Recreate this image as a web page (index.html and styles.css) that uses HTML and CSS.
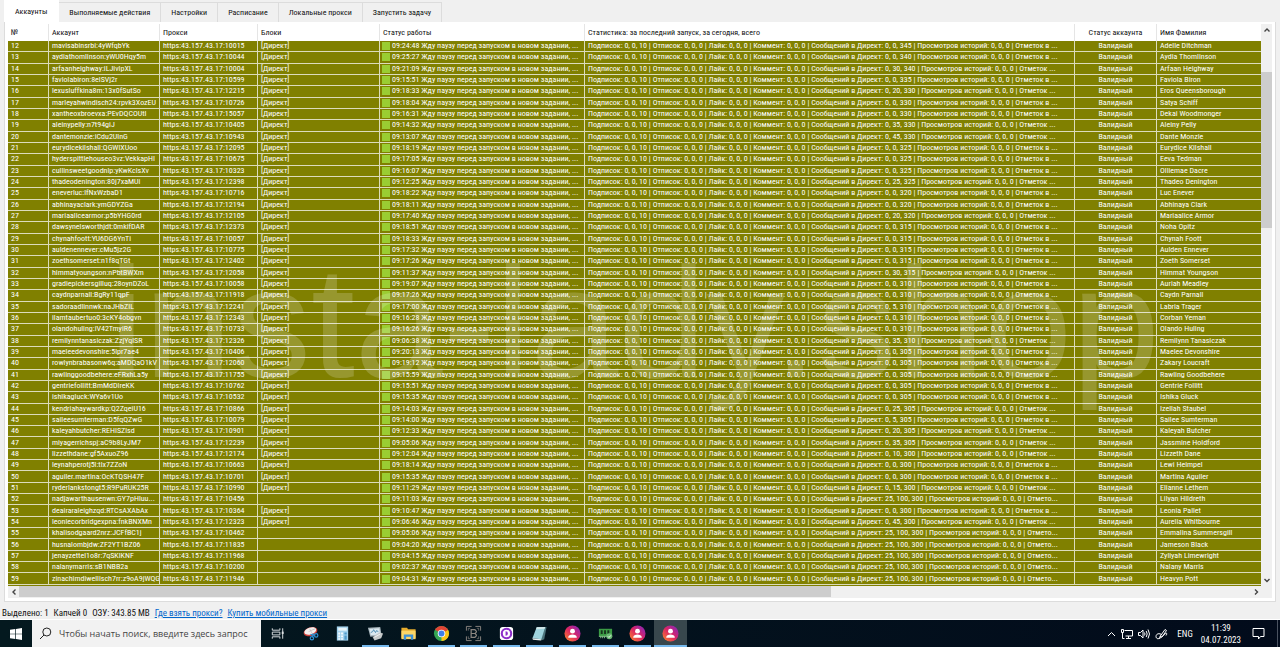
FILE: index.html
```
<!DOCTYPE html>
<html lang="ru">
  <head>
    <meta charset="UTF-8" />
    <meta name="viewport" content="width=device-width, initial-scale=1.0" />
    <title>Аккаунты</title>
    <link rel="stylesheet" href="styles.css">
  </head>
  <body>
    <main class="window">
      <nav class="tabs">
        <button class="tab active">Аккаунты</button>
        <button class="tab">Выполняемые действия</button>
        <button class="tab">Настройки</button>
        <button class="tab">Расписание</button>
        <button class="tab">Локальные прокси</button>
        <button class="tab">Запустить задачу</button>
      </nav>

      <div class="panel">
        <div class="table-view">
          <table class="accounts">
            <colgroup>
              <col class="col-num">
              <col class="col-account">
              <col class="col-proxy">
              <col class="col-blocks">
              <col class="col-status">
              <col class="col-stats">
              <col class="col-valid">
              <col class="col-name">
            </colgroup>
            <thead>
              <tr>
                <th>№</th>
                <th>Аккаунт</th>
                <th>Прокси</th>
                <th>Блоки</th>
                <th>Статус работы</th>
                <th>Статистика: за последний запуск, за сегодня, всего</th>
                <th class="center">Статус аккаунта</th>
                <th>Имя Фамилия</th>
              </tr>
            </thead>
            <tbody id="rows"></tbody>
          </table>
          <div class="watermark">insta-lady.shop</div>
        </div>
        <div class="scroll-y">
          <button class="arrow" aria-label="Вверх"><svg viewBox="0 0 8 8"><path d="M1.5 5.5 4 3l2.5 2.5" /></svg></button>
          <div class="track-y"><div class="thumb-y"></div></div>
          <button class="arrow" aria-label="Вниз"><svg viewBox="0 0 8 8"><path d="M1.5 3 4 5.5 6.5 3" /></svg></button>
        </div>
        <div class="scroll-x">
          <button class="arrow" aria-label="Влево"><svg viewBox="0 0 8 8"><path d="M5.5 1.5 3 4l2.5 2.5" /></svg></button>
          <div class="track-x"><div class="thumb-x"></div></div>
          <button class="arrow" aria-label="Вправо"><svg viewBox="0 0 8 8"><path d="M3 1.5 5.5 4 3 6.5" /></svg></button>
        </div>
      </div>

      <footer class="status-bar">
        <span>Выделено: 1</span>
        <span>Капчей 0</span>
        <span>ОЗУ: 343.85 MB</span>
        <a href="#">Где взять прокси?</a>
        <a href="#">Купить мобильные прокси</a>
      </footer>
    </main>

    <div class="taskbar">
      <button class="start" aria-label="Пуск">
        <svg width="12" height="12" viewBox="0 0 12 12" fill="#fff"><path d="M0 1.7 5.3 1v4.7H0zM6 .9 12 0v5.7H6zM0 6.3h5.3V11L0 10.3zM6 6.3h6V12l-6-.9z" /></svg>
      </button>
      <label class="search">
        <svg width="13" height="13" viewBox="0 0 13 13" fill="none" stroke="#222"><circle cx="7.8" cy="5" r="4" /><path d="M5 8 1 12" /></svg>
        <input type="text" aria-label="Поиск" value="Чтобы начать поиск, введите здесь запрос">
      </label>

      <div class="apps">
        <button class="app" aria-label="Представление задач">
          <svg viewBox="0 0 18 18" fill="none" stroke="#dfe3e5"><path d="M3.5 3.5V5.5H11.5V3.5M3.5 14.5V12.5H11.5V14.5M3.5 7.5H11.5V10.5H3.5zM14.5 3.5v11" /><path d="M13.5 7h2v2.5h-2z" fill="#dfe3e5" stroke="none" /></svg>
        </button>
        <button class="app" aria-label="Ножницы">
          <svg viewBox="0 0 18 18"><ellipse cx="9" cy="7" rx="7.5" ry="4.5" fill="#d24038" transform="rotate(-18 9 7)" /><ellipse cx="9" cy="6.3" rx="6.5" ry="3.6" fill="#f3eeee" transform="rotate(-18 9 7)" /><path d="M7 7 14 4M8 4l4 7" stroke="#b9b4b8" stroke-width=".7" /><g fill="none" stroke="#2f8dd0" stroke-width="1.3"><circle cx="10.5" cy="14" r="1.8" /><circle cx="15" cy="11" r="1.8" /><path d="M9 10l5 1M12 9l-1 4" /></g></svg>
        </button>
        <button class="app" aria-label="Калькулятор">
          <svg viewBox="0 0 18 18"><path d="M3 1.5h12v15H3z" fill="#a4d3ee" /><path d="M4.5 3h9v3h-9z" fill="#eaf6fc" /><path d="M4.5 8h2v2h-2zm3 0h2v2h-2zM4.5 11h2v2h-2zm3 0h2v2h-2zM4.5 14h2v1.5h-2zm3 0h2v1.5h-2z" fill="#f5fbff" /><path d="M11 8h2.5v2H11zM11 11h2.5v4.5H11z" fill="#4f9bcb" /></svg>
        </button>
        <button class="app running" aria-label="Диспетчер задач">
          <svg viewBox="0 0 18 18"><path d="M1 3 14 2l1.5 9.5-12 1z" fill="#a9b6bd" /><path d="M2.5 4.2 13 3.5l1 6.5-10 .8z" fill="#dbe9f0" /><path d="M4 8l2-1 1-2 2 3 1-2 2 1" fill="none" stroke="#4b8bb0" /><path d="M6 13l7-5 4 1-2 5-7 2.5z" fill="#c5c9c9" /><path d="M8 13l6-3.5" stroke="#f4f4f4" /></svg>
        </button>
        <button class="app" aria-label="Проводник">
          <svg viewBox="0 0 18 18"><path d="M1.5 3h6l1 1.5h8V14h-15z" fill="#e6ad2e" /><path d="M1.5 6h15v9h-15z" fill="#fcd667" /><path d="M4 10h10v5.5h-2.5v-3h-5v3H4z" fill="#3e92d6" /></svg>
        </button>
        <button class="app running" aria-label="Chrome">
          <svg viewBox="0 0 18 18"><circle cx="9" cy="9" r="8" fill="#35a453" /><path d="M9 9 2.1 5A8 8 0 0 1 15.9 5z" fill="#e24435" /><path d="M9 9 15.9 5A8 8 0 0 1 9 17z" fill="#fbc417" /><path d="M9 5h6.9L9 9z" fill="#e24435" /><circle cx="9" cy="9" r="4" fill="#fff" /><circle cx="9" cy="9" r="3.1" fill="#3f7fe8" /></svg>
        </button>
        <button class="app running" aria-label="BAS">
          <svg viewBox="0 0 18 18" fill="none" stroke="#8a8580"><path d="M1.5 6V1.5H7M11 1.5h5.5V6M16.5 12v4.5H11M7 16.5H1.5V12" /><path d="M6.5 5h4L12 6.5v1L10.5 9l1.5 1.5v1L10.5 13h-4zM6.5 9h4" stroke-width="1.3" /><path d="M3.5 6V3.5h2M12.5 3.5h2V6M14.5 12v2.5h-2M5.5 14.5h-2V12" stroke-width=".7" /></svg>
        </button>
        <button class="app running" aria-label="Dolphin">
          <svg viewBox="0 0 18 18"><rect x="2" y="2" width="14" height="14" rx="3" fill="#fff" /><circle cx="9" cy="9" r="5" fill="none" stroke="#8d2fc9" stroke-width="2.2" /><path d="M8 6.5a2.5 2.5 0 0 1 0 5z" fill="#8d2fc9" /></svg>
        </button>
        <button class="app running" aria-label="Блокнот">
          <svg viewBox="0 0 18 18"><path d="M7 2h9.5L14 15l-3 1.5z" fill="#4c747c" /><path d="M6 2.5 15 2l-4 13-9.5-1z" fill="#9ed3dd" /><path d="M6 2.5 15 2l-.5 2-9 .5z" fill="#d3e7e9" /><path d="M1.5 14l9.5 1-.5 1.5-8.500-1z" fill="#e8eeee" /></svg>
        </button>
        <button class="app running" aria-label="Insta">
          <svg viewBox="0 0 18 18"><defs><linearGradient id="insta" x1="1" y1="0" x2="0" y2="1"><stop offset="0" stop-color="#7a25c8" /><stop offset=".5" stop-color="#dc2563" /><stop offset="1" stop-color="#ff8b25" /></linearGradient></defs><circle cx="9" cy="9" r="8.5" fill="url(#insta)" /><circle cx="9" cy="6.5" r="2.6" fill="#fff" /><path d="M4.5 13c0-4 9-4 9 0v.5h-9z" fill="#fff" /></svg>
        </button>
        <button class="app running" aria-label="Прокси">
          <svg viewBox="0 0 18 18"><path d="M2 4h14v8H2z" fill="#3b9b45" /><path d="M4 5.5h2v4H4zm3.5 0h2v4h-2zm3.5 0h2v4h-2z" fill="#17351c" /><path d="M2 12h14M4 12v2M6 12v2M8 12v2" stroke="#8bc48e" /><circle cx="13" cy="12" r="3.2" fill="#6cb974" /><path d="M11.5 12l1.2 1.2 2-2.2" fill="none" stroke="#fff" /></svg>
        </button>
        <button class="app running" aria-label="Insta">
          <svg viewBox="0 0 18 18"><circle cx="9" cy="9" r="8.5" fill="url(#insta)" /><circle cx="9" cy="6.5" r="2.6" fill="#fff" /><path d="M4.5 13c0-4 9-4 9 0v.5h-9z" fill="#fff" /></svg>
        </button>
        <button class="app running current" aria-label="Insta">
          <svg viewBox="0 0 18 18"><circle cx="9" cy="9" r="8.5" fill="url(#insta)" /><circle cx="9" cy="6.5" r="2.6" fill="#fff" /><path d="M4.5 13c0-4 9-4 9 0v.5h-9z" fill="#fff" /></svg>
        </button>
      </div>

      <div class="tray">
        <svg width="9" height="12" viewBox="0 0 9 12"><path d="M1 8l3.5-3.5L8 8" /></svg>
        <svg width="12" height="12" viewBox="0 0 12 12"><path d="M3.5 2.5h8V8h-7M7.5 8v2.5M5 10.5h5M.5 1.5h2v3h-2zM1.5 4.5v6h2" /></svg>
        <svg width="12" height="12" viewBox="0 0 12 12"><path d="M.5 4.5h2L5 2v8L2.5 7.5h-2zM6.5 4.5q1 1.5 0 3M8.2 3q2 3 0 6M10 1.5q3 4.5 0 9" /></svg>
        <svg width="13" height="12" viewBox="0 0 13 12"><path d="M5 8.5 10 1.5l1.5 1L7 9zM5 8.5 4.5 10.5M6.5 6.5C2 4 0 8 1.5 10s5-.5 8-3.5 2.5 0 1.5 1" /></svg>
        <span class="lang">ENG</span>
        <time class="clock">11:39<br>04.07.2023</time>
        <svg width="13" height="13" viewBox="0 0 13 13"><path d="M1 1.5h11v8H8.5L6.5 12V9.5H1z" /></svg>
      </div>
      <div class="show-desktop"></div>
    </div>
    <script src="script.js"></script>
  </body>
</html>
```
FILE: styles.css
```
* {
  box-sizing: border-box;
}

body {
  margin: 0;
  height: 100vh;
  display: flex;
  flex-direction: column;
  overflow: hidden;
  background-color: #f0f0f0;
  color: #111;
  font-family: "Roboto Condensed", "Liberation Sans", Arial, sans-serif;
  font-size: 8px;
}

button {
  margin: 0;
  padding: 0;
  border: none;
  background: none;
  color: inherit;
  font: inherit;
}

.window {
  flex: 1;
  min-height: 0;
  display: flex;
  flex-direction: column;
  padding: 0 4px;
  border-bottom: 1px solid #fff;
}

/* tabs */
.tabs {
  display: flex;
  align-items: flex-end;
  height: 22px;
}

.tab {
  height: 20px;
  padding: 0 10px;
  border: 1px solid #dcdcdc;
  border-left: none;
  border-bottom: none;
  background-color: #f0f0f0;
  white-space: nowrap;
}

.tab.active {
  height: 22px;
  padding: 0 11px;
  border-color: #fff;
  background-color: #fff;
}

/* table with its scrollbars */
.panel {
  flex: 1;
  min-height: 0;
  display: grid;
  grid-template-columns: 1fr 11px;
  grid-template-rows: 1fr 12px;
  padding: 2px 3px 3px;
  border: 1px solid #dcdcdc;
  border-top: none;
  background-color: #fff;
}

.table-view {
  position: relative;
  min-width: 0;
  min-height: 0;
  overflow: hidden;
  padding-bottom: 1px;
  background-color: #808000;
}

.accounts {
  width: 100%;
  height: 100%;
  table-layout: fixed;
  border-collapse: separate;
  border-spacing: 0;
}

.col-num { width: 41px; }
.col-account { width: 111px; }
.col-proxy { width: 98px; }
.col-blocks { width: 122px; }
.col-status { width: 205px; }
.col-valid { width: 82px; }
.col-name { width: 104px; }

.accounts th {
  height: 17px;
  padding: 0 3px;
  border-right: 1px solid #e5e5e5;
  background-color: #fff;
  font-weight: normal;
  text-align: left;
  white-space: nowrap;
}

.accounts td {
  padding: 0 0 0 3px;
  border-right: 1px solid #dcdcbc;
  border-bottom: 1px solid #dcdcbc;
  color: #fff;
  line-height: 10px;
  white-space: nowrap;
  overflow: hidden;
}

.accounts th:last-child,
.accounts td:last-child {
  border-right: none;
}

.accounts .center {
  padding: 0;
  text-align: center;
}

.state {
  display: inline-block;
  width: 8px;
  height: 8px;
  margin: 1px 2px 0 -1px;
  background-color: #9acd32;
  vertical-align: top;
}

.watermark {
  position: absolute;
  top: 53%;
  left: 50%;
  transform: translate(-50%, -50%);
  font-family: "Liberation Sans", Arial, sans-serif;
  font-size: 158px;
  line-height: 1;
  white-space: nowrap;
  color: rgba(255, 255, 255, 0.18);
  pointer-events: none;
}

.scroll-y,
.scroll-x {
  display: flex;
  background-color: #f0f0f0;
}

.scroll-y {
  flex-direction: column;
}

.scroll-x {
  grid-column: 1 / 3;
  padding-right: 11px;
}

.arrow {
  flex: none;
  width: 11px;
  height: 12px;
  display: flex;
  align-items: center;
  justify-content: center;
}

.arrow svg {
  width: 8px;
  height: 8px;
  fill: none;
  stroke: #444;
  stroke-width: 1.4;
}

.track-y,
.track-x {
  flex: 1;
}

.track-y {
  padding-top: 36px;
}

.thumb-y {
  height: 31%;
  background-color: #cdcdcd;
}

.thumb-x {
  width: 66%;
  height: 11px;
  background-color: #cdcdcd;
}

/* line under the table */
.status-bar {
  display: flex;
  align-items: center;
  gap: 5px;
  height: 17px;
  margin-left: -2px;
  padding-top: 4px;
  font-size: 9px;
  white-space: nowrap;
}

.status-bar a {
  color: #0066cc;
}

/* taskbar */
.taskbar {
  display: flex;
  height: 27px;
  background: linear-gradient(to right, #04191f, #020b1b);
  color: #fff;
  font-size: 9px;
}

.start {
  width: 32px;
  display: flex;
  align-items: center;
  justify-content: center;
}

.search {
  display: flex;
  align-items: center;
  gap: 7px;
  width: 229px;
  padding-left: 7px;
  background-color: #f2f2f2;
}

.search svg {
  flex: none;
}

.search input {
  flex: 1;
  min-width: 0;
  padding: 0;
  border: none;
  outline: none;
  background: none;
  color: #444;
  font-family: "Open Sans", "Noto Sans", sans-serif;
  font-size: 9px;
}

.apps {
  display: flex;
  width: 426px;
}

.app {
  flex: 1;
  display: flex;
  align-items: center;
  justify-content: center;
}

.app svg {
  width: 17px;
  height: 17px;
}

.app.running {
  background: linear-gradient(#76b9ed, #76b9ed) center bottom / 27px 2px no-repeat;
}

.app.current {
  background-color: #38474d;
  background-size: 100% 2px;
}

.tray {
  display: flex;
  align-items: center;
  gap: 5px;
  margin-left: auto;
  padding-right: 12px;
}

.tray svg {
  fill: none;
  stroke: #fff;
}

.lang {
  margin-left: 4px;
}

.clock {
  margin: 0 6px 0 3px;
  line-height: 12px;
  text-align: center;
}

.show-desktop {
  width: 3px;
  border-left: 1px solid #4a5260;
}
```
FILE: script.js
```
// номер, аккаунт, порт, блок, время, сообщений в директ, имя
const accounts = [
  [12, 'mavisabinsrbi:4yWfqbYk', 10015, 1, '09:24:48', '0, 0, 345', 'Adelle Ditchman'],
  [13, 'aydiathomlinson:yWU0Hqy5m', 10044, 1, '09:25:27', '0, 0, 340', 'Aydia Thomlinson'],
  [14, 'arfaanheighway:iLJivlpXL', 10004, 1, '09:21:09', '0, 30, 340', 'Arfaan Heighway'],
  [15, 'faviolabiron:8elSVj2r', 10599, 1, '09:15:51', '0, 0, 335', 'Faviola Biron'],
  [16, 'lexusluffkina8m:13x0fSutSo', 12215, 1, '09:18:33', '0, 20, 330', 'Eros Queensborough'],
  [17, 'marleyahwindisch24:rpvk3XozEU', 10726, 1, '09:18:04', '0, 0, 330', 'Satya Schiff'],
  [18, 'xantheoxbroevxa:PEvDQCOUtI', 15057, 1, '09:16:31', '0, 0, 330', 'Dekai Woodmonger'],
  [19, 'aleinypelly:n7t94giJ', 10405, 1, '09:14:32', '0, 35, 330', 'Aleiny Pelly'],
  [20, 'dantemonzie:iCdu2UlnG', 10943, 1, '09:13:07', '0, 45, 330', 'Dante Monzie'],
  [21, 'eurydicekilshall:QGWlXUoo', 12095, 1, '09:18:19', '0, 0, 325', 'Eurydice Kilshall'],
  [22, 'hyderspittlehouseo3vz:VekkapHI', 10675, 1, '09:17:05', '0, 0, 325', 'Eeva Tedman'],
  [23, 'cullinsweetgoodnlp:yKwKclsXv', 10323, 1, '09:16:07', '0, 0, 325', 'Olliemae Dacre'],
  [24, 'thadeodenington:80j7xaMUi', 12398, 1, '09:12:25', '0, 25, 325', 'Thadeo Denington'],
  [25, 'eneverluc:lfNxWzbaD1', 10716, 1, '09:18:22', '0, 0, 320', 'Luc Enever'],
  [26, 'abhinayaclark:ymGDYZGa', 12194, 1, '09:18:11', '0, 0, 320', 'Abhinaya Clark'],
  [27, 'mariaalicearmor:p5bYHG0rd', 12105, 1, '09:17:40', '0, 20, 320', 'Mariaalice Armor'],
  [28, 'dawsynelsworthjdt:0mkifDAR', 12373, 1, '09:18:51', '0, 0, 315', 'Noha Opitz'],
  [29, 'chynahfoott:YU6DG6YnTi', 10057, 1, '09:18:33', '0, 0, 315', 'Chynah Foott'],
  [30, 'auldenennever:cMu5jz2G', 10775, 1, '09:17:32', '0, 0, 315', 'Aulden Ennever'],
  [31, 'zoethsomerset:n1f8qTGt', 12402, 1, '09:17:26', '0, 0, 315', 'Zoeth Somerset'],
  [32, 'himmatyoungson:nPbtBWXm', 12058, 1, '09:11:37', '0, 30, 315', 'Himmat Youngson'],
  [33, 'gradiepickersgilluq:28oynDZoL', 10058, 1, '09:19:07', '0, 0, 310', 'Auriah Meadley'],
  [34, 'caydnparnall:BgRy11qpF', 11918, 1, '09:17:26', '0, 0, 310', 'Caydn Parnall'],
  [35, 'sadoraadlinnwk:naJHbZIL', 12241, 1, '09:17:00', '0, 5, 310', 'Labria Trager'],
  [36, 'ilamtaubertuo0:3cKY4obgvn', 12343, 1, '09:16:28', '0, 0, 310', 'Corban Yeman'],
  [37, 'olandohuling:iV42TmyiR6', 10733, 1, '09:16:26', '0, 0, 310', 'Olando Huling'],
  [38, 'remilynntanasiczak:ZzjYqlSR', 12326, 1, '09:06:38', '0, 35, 310', 'Remilynn Tanasiczak'],
  [39, 'maeleedevonshire:5lpr7ae4', 10406, 1, '09:20:13', '0, 0, 305', 'Maelee Devonshire'],
  [40, 'rowlynbrabasonw6q:aMDQaO1kV', 12060, 1, '09:19:12', '0, 0, 305', 'Zakary Loucraft'],
  [41, 'rawlinggoodbehere:eFRxhLa5y', 11755, 1, '09:15:59', '0, 0, 305', 'Rawling Goodbehere'],
  [42, 'gentriefollitt:BmMdDlreKK', 10762, 1, '09:15:51', '0, 0, 305', 'Gentrie Follitt'],
  [43, 'ishikagluck:WYa6v1Uo', 10532, 1, '09:15:35', '0, 0, 305', 'Ishika Gluck'],
  [44, 'kendriahaywardkp:Q2ZqeiU16', 10866, 1, '09:14:03', '0, 25, 305', 'Izellah Staubel'],
  [45, 'saileesumterman:D5fqQZwG', 10079, 1, '09:14:00', '0, 5, 305', 'Sailee Sumterman'],
  [46, 'kaleyahbutcher:REHISZlsd', 10901, 1, '09:12:33', '0, 20, 305', 'Kaleyah Butcher'],
  [47, 'miyagerrichspj:aC9b8LyJM7', 12239, 1, '09:05:06', '0, 35, 305', 'Jassmine Holdford'],
  [48, 'lizzethdane:gf5AxuoZ96', 12174, 1, '09:12:04', '0, 10, 300', 'Lizzeth Dane'],
  [49, 'leynahperotj5l:tlx7ZZoN', 10663, 1, '09:18:14', '0, 0, 300', 'Lewi Heimpel'],
  [50, 'aguiler.martina:OcKTQSH47F', 10701, 1, '09:15:35', '0, 0, 300', 'Martina Aguiler'],
  [51, 'ryderlankstongt5:R9PuRUK25R', 10990, 1, '09:11:29', '0, 15, 300', 'Elianne Lethem'],
  [52, 'nadjawarthausenwn:GY7pHluu...', 10456, 0, '09:11:03', '25, 100, 300', 'Lilyan Hildreth'],
  [53, 'deairaraleighzqd:RTCsAXAbAx', 10364, 1, '09:10:47', '0, 0, 300', 'Leonia Pallet'],
  [54, 'leoniecorbridgexpna:fnkBNXMn', 12323, 1, '09:06:46', '0, 45, 300', 'Aurelia Whitbourne'],
  [55, 'khalisodgaard2nrz:JCFfBC1j', 10462, 0, '09:05:06', '25, 100, 300', 'Emmalina Summersgill'],
  [56, 'husnalombjdw:ZF2YT1BZ06', 11835, 0, '09:04:20', '25, 100, 300', 'Jameson Black'],
  [57, 'jenayzettel1o8r:7qSKlKNF', 11968, 0, '09:04:15', '25, 100, 300', 'Zyliyah Limewright'],
  [58, 'nalanymarris:sB1NBB2a', 10200, 0, '09:02:37', '25, 100, 300', 'Nalany Marris'],
  [59, 'zinachimdiwellisch7rr:z9oA9jWQG', 11946, 0, '09:04:31', '25, 100, 300', 'Heavyn Pott'],
];

// чем длиннее счётчик, тем раньше обрезается хвост строки
function tail(direct) {
  if (direct.length > 10) return 'Отмето...';
  return direct.length > 9 ? 'Отметок ...' : 'Отметок в ...';
}

const rows = document.getElementById('rows');

rows.innerHTML = accounts
  .map(
    ([num, login, port, block, time, direct, name]) => `
      <tr>
        <td>${num}</td>
        <td>${login}</td>
        <td>https:43.157.43.17:${port}</td>
        <td>${block ? '[Директ]' : ''}</td>
        <td><span class="state"></span>${time} Жду паузу перед запуском в новом задании, ...</td>
        <td>Подписок: 0, 0, 10 | Отписок: 0, 0, 0 | Лайк: 0, 0, 0 | Коммент: 0, 0, 0 | Сообщений в Директ: ${direct} | Просмотров историй: 0, 0, 0 | ${tail(direct)}</td>
        <td class="center">Валидный</td>
        <td>${name}</td>
      </tr>`
  )
  .join('');
```
